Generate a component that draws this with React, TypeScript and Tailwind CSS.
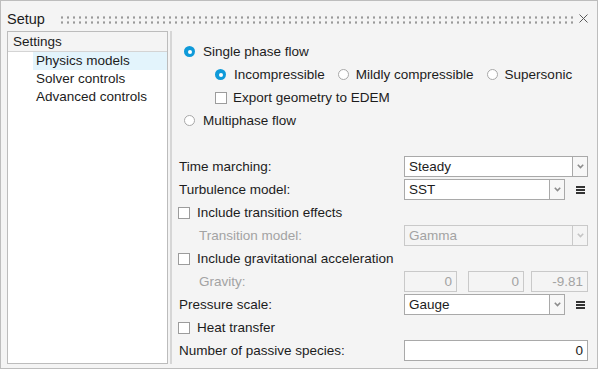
import React from 'react'

const font = { fontFamily: '"Liberation Sans", Arial, sans-serif' }

const Radio = ({ checked = false }: { checked?: boolean }) =>
  checked ? (
    <span className="flex h-[11px] w-[11px] shrink-0 items-center justify-center rounded-full bg-[#0f9ad9]">
      <span className="h-[4px] w-[4px] rounded-full bg-white" />
    </span>
  ) : (
    <span className="h-[11px] w-[11px] shrink-0 rounded-full border border-[#a8a8a8] bg-white" />
  )

const Checkbox = () => <span className="h-[12px] w-[12px] shrink-0 border border-[#9c9c9c] bg-white" />

const Chevron = ({ disabled = false }: { disabled?: boolean }) => (
  <svg width="7" height="5" viewBox="0 0 7 5">
    <path d="M0.8 0.8 L3.5 3.6 L6.2 0.8" fill="none" stroke={disabled ? '#c4c4c4' : '#8c8c8c'} strokeWidth="1.6" />
  </svg>
)

const Menu = () => (
  <div className="ml-[11px] flex w-[9px] flex-col gap-[1px]">
    <span className="h-[2px] bg-[#333]" />
    <span className="h-[2px] bg-[#333]" />
    <span className="h-[2px] bg-[#333]" />
  </div>
)

const Select = ({ value, width, disabled = false }: { value: string; width: string; disabled?: boolean }) => (
  <div className="flex h-[21px]">
    <div
      className={`${width} flex items-center border pl-[4px] ${
        disabled ? 'border-[#c9c9c9] bg-[#f4f4f4] text-[#a3a3a3]' : 'border-[#a9a9a9] bg-white text-[#1c1c1c]'
      }`}
    >
      {value}
    </div>
    <div
      className={`flex w-[15px] items-center justify-center border-y border-r ${
        disabled ? 'border-[#c9c9c9] bg-[#f4f4f4]' : 'border-[#a9a9a9] bg-[#f7f7f7]'
      }`}
    >
      <Chevron disabled={disabled} />
    </div>
  </div>
)

const Row = ({ label, muted = false, children }: { label: string; muted?: boolean; children?: React.ReactNode }) => (
  <div className="flex h-[23px] items-center">
    <div className={`w-[225px] ${muted ? 'pl-[20px] text-[#a3a3a3]' : ''}`}>{label}</div>
    {children}
  </div>
)

const CheckRow = ({ label }: { label: string }) => (
  <div className="-ml-px flex h-[23px] items-center gap-[7px]">
    <Checkbox />
    <span>{label}</span>
  </div>
)

const Num = ({ value, width, disabled = false }: { value: string; width: string; disabled?: boolean }) => (
  <div
    className={`${width} flex h-[21px] items-center justify-end border pr-[4px] ${
      disabled ? 'border-[#c9c9c9] bg-[#f4f4f4] text-[#a3a3a3]' : 'border-[#a9a9a9] bg-white text-[#1c1c1c]'
    }`}
  >
    {value}
  </div>
)

export default function App() {
  return (
    <div style={font} className="h-[371px] w-[600px] bg-white text-[13.5px] leading-[16px] text-[#1c1c1c]">
      <div className="flex h-[369px] w-[598px] flex-col border border-[#bdbdbd] bg-[#f4f4f4]">
        {/* title */}
        <div className="flex h-[30px] shrink-0 items-start">
          <div className="ml-[6px] mt-[10px] text-[14.5px] leading-[17px]">Setup</div>
          <div className="ml-[14px] mt-[14px] h-[10px] w-[518px] bg-[radial-gradient(circle,#9a9a9a_1px,transparent_1.3px)] bg-[length:6px_5px]" />
          <svg className="ml-[2px] mt-[13px]" width="9" height="9" viewBox="0 0 9 9">
            <path d="M0.5 0.5 L8.5 8.5 M8.5 0.5 L0.5 8.5" stroke="#5a5a5a" strokeWidth="1" />
          </svg>
        </div>

        <div className="flex h-[333px]">
          {/* tree */}
          <div className="ml-[6px] flex w-[161px] flex-col border border-[#bcbcbc] bg-white">
            <div className="flex h-[20px] items-center border-b border-[#d4d4d4] bg-[#f4f4f4] pl-[5px]">Settings</div>
            <div className="ml-[25px] flex h-[18px] items-center bg-[#e3f4fc] pl-[3px]">Physics models</div>
            <div className="ml-[25px] flex h-[18px] items-center pl-[3px]">Solver controls</div>
            <div className="ml-[25px] flex h-[18px] items-center pl-[3px]">Advanced controls</div>
          </div>

          {/* content */}
          <div className="ml-[2px] flex-1 border-l-2 border-[#d6d6d6] pl-[7px] pt-[9px]">
            <div className="ml-[5px] flex h-[23px] items-center gap-[8px]">
              <Radio checked />
              <span>Single phase flow</span>
            </div>
            <div className="ml-[36px] flex h-[23px] items-center">
              <div className="flex items-center gap-[8px]">
                <Radio checked />
                <span>Incompressible</span>
              </div>
              <div className="ml-[13px] flex items-center gap-[7px]">
                <Radio />
                <span>Mildly compressible</span>
              </div>
              <div className="ml-[13px] flex items-center gap-[7px]">
                <Radio />
                <span>Supersonic</span>
              </div>
            </div>
            <div className="ml-[36px] flex h-[23px] items-center gap-[6px]">
              <Checkbox />
              <span>Export geometry to EDEM</span>
            </div>
            <div className="ml-[5px] flex h-[23px] items-center gap-[8px]">
              <Radio />
              <span>Multiphase flow</span>
            </div>

            <div className="mt-[23px]">
              <Row label="Time marching:">
                <Select value="Steady" width="w-[169px]" />
              </Row>
              <Row label="Turbulence model:">
                <Select value="SST" width="w-[146px]" />
                <Menu />
              </Row>
              <CheckRow label="Include transition effects" />
              <Row label="Transition model:" muted>
                <Select value="Gamma" width="w-[169px]" disabled />
              </Row>
              <CheckRow label="Include gravitational acceleration" />
              <Row label="Gravity:" muted>
                <Num value="0" width="w-[53px]" disabled />
                <div className="ml-[11px]">
                  <Num value="0" width="w-[56px]" disabled />
                </div>
                <div className="ml-[7px]">
                  <Num value="-9.81" width="w-[57px]" disabled />
                </div>
              </Row>
              <Row label="Pressure scale:">
                <Select value="Gauge" width="w-[146px]" />
                <Menu />
              </Row>
              <CheckRow label="Heat transfer" />
              <Row label="Number of passive species:">
                <Num value="0" width="w-[184px]" />
              </Row>
            </div>
          </div>
        </div>
      </div>
    </div>
  )
}
